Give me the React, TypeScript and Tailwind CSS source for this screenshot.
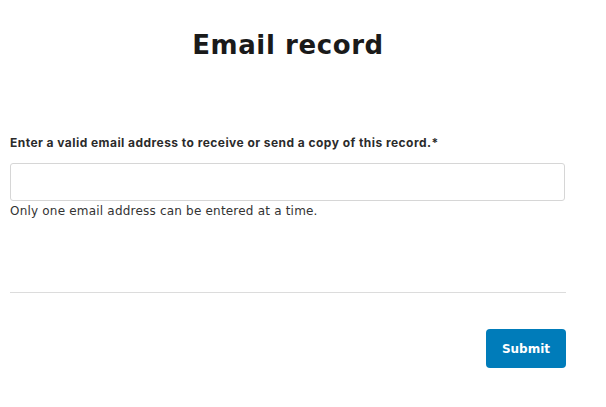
export default function App() {
  return (
    <div className="min-h-[407px] w-[606px] bg-white font-['DejaVu_Sans',sans-serif] text-[#1a1a1a]">
      <div className="ml-[10px] w-[556px] pt-[29px]">
        <h1 className="text-center text-[26px] font-bold leading-[32px] tracking-[0.6px]">
          Email record
        </h1>

        <div className="mt-[74px]">
          <label className="block font-['Inter',sans-serif] text-[12px] font-bold leading-[16px] tracking-[0.45px] text-[#2b2b2b]">
            Enter a valid email address to receive or send a copy of this record.*
          </label>
          <input
            type="email"
            className="mt-[12px] block h-[38px] w-[555px] rounded-[3px] border border-[#d6d6d6] bg-white px-3 text-[13px] outline-none"
          />
          <p className="mt-[2px] text-[12px] leading-[16px] tracking-[0.2px] text-[#333]">
            Only one email address can be entered at a time.
          </p>
        </div>

        <hr className="mt-[73px] border-t border-[#dcdcdc]" />

        <div className="mt-[36px] flex justify-end">
          <button
            type="button"
            className="h-[39px] w-[80px] rounded-[4px] bg-[#007cba] text-[12px] font-bold text-white"
          >
            Submit
          </button>
        </div>
      </div>
    </div>
  );
}
